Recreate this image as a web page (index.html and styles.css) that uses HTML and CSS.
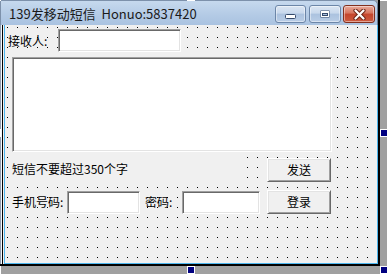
FILE: index.html
```html
<!DOCTYPE html>
<html lang="zh-CN">
<head>
    <meta charset="UTF-8">
    <meta name="viewport" content="width=device-width, initial-scale=1.0">
    <title>139发移动短信</title>
    <link rel="stylesheet" href="styles.css">
</head>
<body>
    <div class="designer">
        <div class="formWindow">
            <div class="titleBar">
                <span class="titleText">139发移动短信&nbsp;&nbsp;Honuo:5837420</span>
                <div class="captionButtons">
                    <span class="capButton minButton">
                        <svg width="11" height="5" viewBox="0 0 11 5"><rect x="0.5" y="0.5" width="10" height="4" rx="1" fill="#fff" stroke="#34496a"/></svg>
                    </span>
                    <span class="capButton maxButton">
                        <svg width="10" height="8" viewBox="0 0 10 8"><rect x="0.5" y="0.5" width="9" height="7" fill="#34496a"/><rect x="1" y="1" width="8" height="6" fill="#fff"/><rect x="2.5" y="3.5" width="5" height="2" fill="#a9c0de" stroke="#34496a"/></svg>
                    </span>
                    <span class="capButton closeButton">
                        <svg width="13" height="11" viewBox="0 0 13 11"><path d="M2.5 1.5 L10.5 9.5 M10.5 1.5 L2.5 9.5" stroke="#6a2416" stroke-width="4.2" stroke-linecap="round"/><path d="M2.5 1.5 L10.5 9.5 M10.5 1.5 L2.5 9.5" stroke="#fff" stroke-width="2.2" stroke-linecap="round"/></svg>
                    </span>
                </div>
            </div>

            <div class="client">
                <div class="receiverRow">
                    <span class="fieldLabel receiverLabel">接收人:</span>
                    <span class="textBox receiverBox"></span>
                </div>

                <div class="textBox messageBox"></div>

                <div class="sendRow">
                    <span class="tipLabel">短信不要超过350个字</span>
                    <span class="cmdButton">发送</span>
                </div>

                <div class="loginRow">
                    <span class="fieldLabel phoneLabel">手机号码:</span>
                    <span class="textBox phoneBox"></span>
                    <span class="fieldLabel pwdLabel">密码:</span>
                    <span class="textBox pwdBox"></span>
                    <span class="cmdButton loginButton">登录</span>
                </div>
            </div>
        </div>

        <!-- sizing handles of the selected form -->
        <span class="handle handleTopLeft"></span>
        <span class="handle handleTopMid"></span>
        <span class="handle handleTopRight"></span>
        <span class="handle handleMidLeft"></span>
        <span class="handle handleMidRight"></span>
        <span class="handle handleBottomLeft"></span>
        <span class="handle handleBottomMid"></span>
        <span class="handle handleBottomRight"></span>
    </div>
</body>
</html>
```

FILE: styles.css
```css
body {
    margin: 0;
    padding: 0;
    background-color: #a0a0a0;
    font-family: "Noto Sans CJK SC", sans-serif;
    font-size: 12px;
    color: #000;
    overflow: hidden;
}

.designer {
    position: relative;
    width: 387px;
    height: 274px;
}

.formWindow {
    width: 378px;
    border-right: 2px solid #000;
    border-bottom: 2px solid #000;
}

/* title bar */

.titleBar {
    box-sizing: border-box;
    height: 25px;
    display: flex;
    align-items: center;
    padding-left: 8px;
    padding-right: 2px;
    background: linear-gradient(#c6d9ee, #b3cae5 60%, #aac3e1);
    border-top: 1px solid #7d91ab;
    border-left: 1px solid #7d91ab;
    border-right: 1px solid #6b7f99;
    border-top-right-radius: 5px;
}

.titleText {
    font-size: 13px;
    line-height: 15px;
    color: #1a1a1a;
    white-space: nowrap;
    margin-top: 1px;
}

.captionButtons {
    margin-left: auto;
    display: flex;
    align-self: flex-start;
    margin-top: 4px;
}

.capButton {
    box-sizing: border-box;
    width: 32px;
    height: 18px;
    border: 1px solid #6c86a8;
    border-radius: 3px;
    background: linear-gradient(#dbe6f3, #c8d8ec 45%, #abc2df 50%, #b9cde6);
    box-shadow: inset 0 0 0 1px rgba(255, 255, 255, 0.45);
    display: flex;
    justify-content: center;
    align-items: center;
}

.capButton svg {
    display: block;
}

.minButton {
    width: 31px;
    align-items: flex-end;
    padding-bottom: 3px;
}

.maxButton {
    margin-left: 3px;
}

.closeButton {
    margin-left: 2px;
    border-color: #82301f;
    background: linear-gradient(#e9ab9c, #d7745d 45%, #c4452c 50%, #cd5b3f);
}

/* form client area with the designer grid */

.client {
    box-sizing: border-box;
    height: 239px;
    background-color: #f0f0f0;
    background-image:
        linear-gradient(to bottom, transparent 1px, #f0f0f0 1px),
        linear-gradient(to right, #000 1px, #f0f0f0 1px);
    background-size: 10px 10px, 10px 10px;
    background-position: 0 2px, 7px 0;
    box-shadow:
        inset 1px 0 #8e9eb2,
        inset 2px 0 #f4f7fb,
        inset 3px 0 #000,
        inset 4px 0 #f0f0f0,
        inset 5px 0 #4cb6ee,
        inset -1px 0 #4cb6ee,
        inset 0 -1px #4cb6ee;
    padding-top: 4px;
}

.fieldLabel {
    flex: none;
    line-height: 23px;
    white-space: nowrap;
}

.textBox {
    box-sizing: border-box;
    display: block;
    background-color: #fff;
    border: 1px solid;
    border-color: #a0a0a0 #fff #fff #a0a0a0;
    box-shadow: inset 1px 1px #696969, inset -1px -1px #e3e3e3;
}

.receiverRow {
    display: flex;
    margin-left: 8px;
}

.receiverLabel {
    width: 50px;
}

.receiverBox {
    width: 123px;
    height: 23px;
}

.messageBox {
    width: 320px;
    height: 95px;
    margin-top: 5px;
    margin-left: 12px;
}

.sendRow {
    display: flex;
    align-items: flex-start;
    margin-top: 1px;
    margin-left: 10px;
}

.tipLabel {
    box-sizing: border-box;
    width: 235px;
    height: 27px;
    padding-left: 2px;
    padding-top: 9px;
    line-height: 14px;
    background-color: #f0f0f0;
    white-space: nowrap;
}

.cmdButton {
    box-sizing: border-box;
    flex: none;
    width: 64px;
    height: 24px;
    display: flex;
    justify-content: center;
    align-items: center;
    background-color: #f0f0f0;
    border: 1px solid;
    border-color: #fff #696969 #696969 #fff;
    box-shadow: inset 1px 1px #e3e3e3, inset -1px -1px #a0a0a0;
    line-height: 14px;
    margin-left: 22px;
    margin-top: 5px;
}

.loginRow {
    display: flex;
    align-items: flex-start;
    margin-top: 8px;
    margin-left: 12px;
}

.loginRow .fieldLabel {
    line-height: 24px;
}

.phoneLabel {
    width: 55px;
}

.phoneBox {
    width: 73px;
    height: 23px;
    margin-top: 1px;
}

.pwdLabel {
    width: 37px;
    margin-left: 5px;
}

.pwdBox {
    width: 78px;
    height: 23px;
    margin-top: 1px;
}

.loginButton {
    margin-left: 7px;
    margin-top: 0;
}

/* selection handles */

.handle {
    position: absolute;
    box-sizing: border-box;
    width: 8px;
    height: 8px;
    background-color: #000080;
    border: 1px solid #fff;
}

.handleTopLeft { left: -7px; top: -7px; }
.handleTopMid { left: 187px; top: -7px; }
.handleTopRight { left: 380px; top: -7px; }
.handleMidLeft { left: -7px; top: 129px; }
.handleMidRight { left: 380px; top: 129px; }
.handleBottomLeft { left: -7px; top: 266px; }
.handleBottomMid { left: 187px; top: 266px; }
.handleBottomRight { left: 380px; top: 266px; }
```
